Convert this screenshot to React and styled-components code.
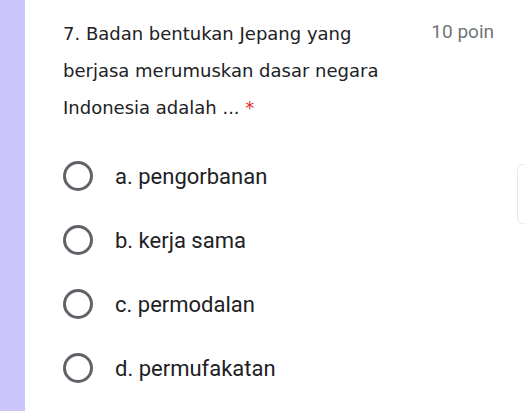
import styled, { createGlobalStyle } from "styled-components";

const GlobalStyle = createGlobalStyle`
  html, body {
    margin: 0;
    padding: 0;
    background: #ffffff;
  }
  body {
    width: 525px;
    height: 411px;
    overflow: hidden;
  }
`;

const OPTIONS = [
  "a. pengorbanan",
  "b. kerja sama",
  "c. permodalan",
  "d. permufakatan",
];

const App = () => {
  return (
    <>
      <GlobalStyle />
      <Page>
        <Accent />
        <Card>
          <Header>
            <Question>
              7. Badan bentukan Jepang yang berjasa merumuskan dasar negara
              Indonesia adalah ... <Required>*</Required>
            </Question>
            <Points>10 poin</Points>
          </Header>
          <OptionList>
            {OPTIONS.map((label) => (
              <Option key={label}>
                <Radio />
                <OptionLabel>{label}</OptionLabel>
              </Option>
            ))}
          </OptionList>
          <SideTab />
        </Card>
      </Page>
    </>
  );
};

export default App;

const Page = styled.div`
  display: flex;
  width: 525px;
  height: 411px;
  background: #fff;
`;

const Accent = styled.div`
  width: 25px;
  flex-shrink: 0;
  background: #cac6fb;
`;

const Card = styled.div`
  position: relative;
  flex: 1;
  padding: 15px 0 0 38px;
`;

const Header = styled.div`
  display: flex;
  justify-content: space-between;
  align-items: flex-start;
`;

const Question = styled.p`
  margin: 0;
  width: 340px;
  font-family: "Comic Sans MS", "DejaVu Sans", sans-serif;
  font-size: 18px;
  line-height: 37px;
  color: #202124;
`;

const Required = styled.span`
  color: #d93025;
`;

const Points = styled.span`
  margin: 5px 31px 0 0;
  font-family: Roboto, "Liberation Sans", sans-serif;
  font-size: 19px;
  line-height: 24px;
  color: #70757a;
`;

const OptionList = styled.div`
  display: flex;
  flex-direction: column;
  gap: 34px;
  margin-top: 35px;
`;

const Option = styled.div`
  display: flex;
  align-items: center;
  gap: 22px;
  height: 30px;
`;

const Radio = styled.span`
  box-sizing: border-box;
  width: 30px;
  height: 30px;
  border: 3px solid #5f6368;
  border-radius: 50%;
  flex-shrink: 0;
`;

const OptionLabel = styled.span`
  font-family: Roboto, "Liberation Sans", sans-serif;
  font-size: 22px;
  color: #202124;
`;

const SideTab = styled.div`
  position: absolute;
  right: -12px;
  top: 164px;
  width: 18px;
  height: 58px;
  border: 1px solid #e8e8e8;
  border-radius: 6px;
  background: #fff;
`;
